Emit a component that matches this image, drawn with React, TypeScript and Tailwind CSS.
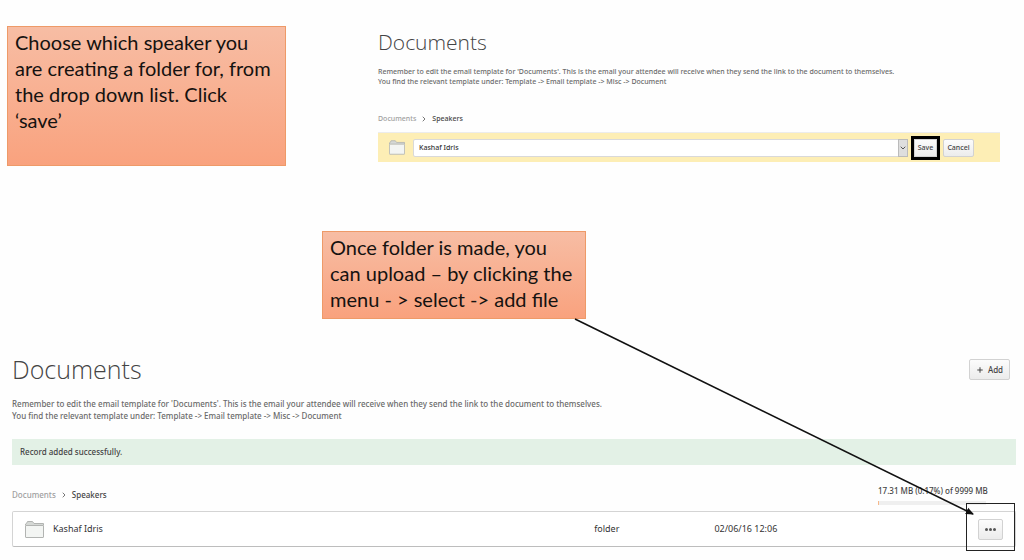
import React, { useState } from 'react'

import { ChevronDown, ChevronRight, Plus } from 'lucide-react'

const speakers = ['Kashaf Idris']

const files = [
    { name: 'Kashaf Idris', type: 'folder', date: '02/06/16 12:06' },
]

function FolderIcon({ className }: { className?: string }) {
    return (
        <svg viewBox="0 0 19 17" fill="none" className={className} aria-hidden="true">
            <path d="M0.5 4.5V3L1.5 2.5L2.5 0.5H7.5L9 2.5H18.5V4.5" fill="#d5d8d5" stroke="#b2b4b2" />
            <rect x="0.5" y="4.5" width="18" height="12" rx="0.5" fill="#f3f5f3" stroke="#b2b4b2" />
        </svg>
    )
}

function Callout({ lines, className }: { lines: string[]; className: string }) {
    return (
        <div className={`shrink-0 border border-[#ee9a68] bg-gradient-to-b from-[#f7bda4] to-[#f9a27e] px-[7px] py-[2px] font-['Lato',sans-serif] text-[20px] leading-[26px] text-[#151210] ${className}`}>
            {lines.map((line) => (
                <span key={line} className="block whitespace-nowrap">{line}</span>
            ))}
        </div>
    )
}

function Intro() {
    return (
        <p className="text-[#6a6a6a]">
            Remember to edit the email template for 'Documents'. This is the email your attendee will receive when they send the link to the document to themselves.
            <br />
            You find the relevant template under: Template -&gt; Email template -&gt; Misc -&gt; Document
        </p>
    )
}

function Breadcrumb() {
    return (
        <nav aria-label="Breadcrumb" className="flex items-center gap-1">
            <a href="#" className="text-[#a0a0a0]">Documents</a>
            <ChevronRight className="h-2 w-2 text-[#777]" strokeWidth={3} />
            <span className="text-[#444]">Speakers</span>
        </nav>
    )
}

const buttonStyle = 'border border-[#d2d2d2] bg-gradient-to-b from-[#fcfcfc] to-[#ececec] text-[#444]'

export default function App() {
    const [speaker, setSpeaker] = useState(speakers[0]);

    return (
        <main className="min-h-screen overflow-hidden bg-[#fefefe] font-['Noto_Sans','Open_Sans',sans-serif] font-medium">
            {/* Step 1 - pick the speaker */}
            <section className="flex items-start pt-[26px] pr-6 pl-[7px]">
                <Callout
                    className="h-[140px] w-[279px] font-normal"
                    lines={['Choose which speaker you', 'are creating a folder for, from', 'the drop down list. Click', '‘save’']}
                />

                <div className="ml-[92px] min-w-0 flex-1 text-[7px] leading-[10px]">
                    <h1 className="mb-2 font-['Open_Sans',sans-serif] text-[21px] leading-[33px] font-light text-[#444]">Documents</h1>
                    <Intro />
                    <div className="mt-[27px] mb-2">
                        <Breadcrumb />
                    </div>

                    <form className="flex h-[30px] items-center gap-[6px] border-t border-[#ececec] bg-[#fdeeb5] pr-[26px] pl-[11px]" onSubmit={(e) => e.preventDefault()}>
                        <FolderIcon className="mr-[2px] h-[15px] w-4" />
                        <div className="relative flex-1">
                            <select
                                aria-label="Speaker"
                                value={speaker}
                                onChange={(e) => setSpeaker(e.target.value)}
                                className="block h-[18px] w-full appearance-none rounded-xs border border-[#d9d9d9] bg-white px-[5px] text-[#333]"
                            >
                                {speakers.map((name) => (
                                    <option key={name}>{name}</option>
                                ))}
                            </select>
                            <span className="pointer-events-none absolute inset-y-0 right-0 flex w-[10px] items-center justify-center border border-[#bbb] bg-[#dedede]">
                                <ChevronDown className="h-2 w-2 shrink-0 text-[#555]" strokeWidth={3} />
                            </span>
                        </div>
                        <button type="submit" className={`h-[18px] w-[23px] outline-3 outline-black ${buttonStyle}`}>Save</button>
                        <button type="button" className={`h-[18px] w-[31px] rounded-xs ${buttonStyle}`}>Cancel</button>
                    </form>
                </div>
            </section>

            {/* Step 2 - upload from the folder menu */}
            <div className="relative mt-[65px] pl-[322px]">
                <Callout
                    className="h-[88px] w-[264px] font-normal"
                    lines={['Once folder is made, you', 'can upload – by clicking the', 'menu - > select -> add file']}
                />
                <div className="pointer-events-none absolute top-full right-[51px] left-[575px] z-10 h-[195px]">
                    <svg className="h-full w-full overflow-visible" aria-hidden="true">
                        <defs>
                            <marker id="arrow" markerUnits="userSpaceOnUse" markerWidth="8" markerHeight="8" refX="7" refY="4" orient="auto">
                                <path d="M0 0.5L8 4L0 7.5Z" fill="#111" />
                            </marker>
                        </defs>
                        <line x1="0" y1="0" x2="100%" y2="100%" stroke="#111" strokeWidth="1.6" markerEnd="url(#arrow)" />
                    </svg>
                </div>
            </div>

            <section className="mt-[31px] pr-2 pl-3 text-[8px] leading-[12px]">
                <div className="mb-[9px] flex items-center justify-between">
                    <h2 className="font-['Open_Sans',sans-serif] text-[25px] leading-[39px] font-light text-[#444]">Documents</h2>
                    <button type="button" className={`mr-[6px] flex h-[21px] w-[41px] items-center justify-center gap-1 rounded-xs ${buttonStyle}`}>
                        <Plus className="h-2 w-2" strokeWidth={3} />
                        Add
                    </button>
                </div>
                <Intro />

                <div role="status" className="mt-[17px] bg-[#e3f1e6] px-2 py-[7px] text-[#444]">
                    Record added successfully.
                </div>

                <div className="mt-5 mb-[6px] flex items-end justify-between">
                    <div className="mb-1">
                        <Breadcrumb />
                    </div>
                    <div className="mr-[22px] w-[116px] text-[#444]">
                        <p className="mb-1 whitespace-nowrap">17.31 MB (0.17%) of 9999 MB</p>
                        <div className="mr-2 h-1 bg-[#efefef]">
                            <div className="h-full w-px bg-[#f7b98b]" />
                        </div>
                    </div>
                </div>

                <div className="rounded-xs border border-[#d4d4d4] border-b-[#bdbdbd] bg-white">
                    <table className="w-full table-fixed text-left text-[9px] font-normal text-[#333]">
                        <tbody>
                            {files.map((file) => (
                                <tr key={file.name} className="h-[34px]">
                                    <td className="w-[58%] pl-3">
                                        <span className="flex items-center gap-[9px]">
                                            <FolderIcon className="h-[17px] w-[19px]" />
                                            {file.name}
                                        </span>
                                    </td>
                                    <td className="w-[12%]">{file.type}</td>
                                    <td>{file.date}</td>
                                    <td className="w-[37px]">
                                        <div className="relative h-[21px] w-[25px]">
                                            <button type="button" aria-label="Folder menu" className={`flex h-full w-full items-center justify-center gap-px rounded-xs ${buttonStyle}`}>
                                                <i className="h-[3px] w-[3px] rounded-full bg-[#555]" />
                                                <i className="h-[3px] w-[3px] rounded-full bg-[#555]" />
                                                <i className="h-[3px] w-[3px] rounded-full bg-[#555]" />
                                            </button>
                                            <span className="pointer-events-none absolute -inset-x-[12px] -top-[16px] -bottom-[11px] border border-[#222]" />
                                        </div>
                                    </td>
                                </tr>
                            ))}
                        </tbody>
                    </table>
                </div>
            </section>
        </main>
    )
}
